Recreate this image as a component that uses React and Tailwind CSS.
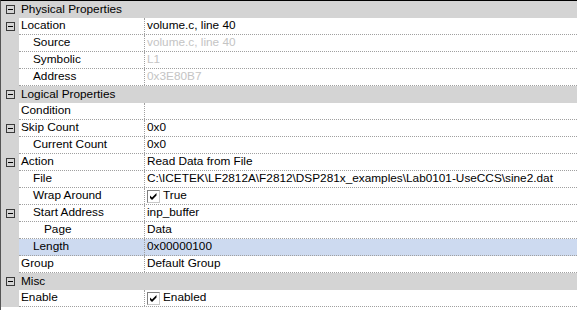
import React from "react";

const rows = [
  { cat: true, name: "Physical Properties" },
  { name: "Location", minus: true, level: 0, value: "volume.c, line 40" },
  { name: "Source", level: 1, value: "volume.c, line 40", dis: true },
  { name: "Symbolic", level: 1, value: "L1", dis: true },
  { name: "Address", level: 1, value: "0x3E80B7", dis: true },
  { cat: true, name: "Logical Properties" },
  { name: "Condition", level: 0, value: "" },
  { name: "Skip Count", minus: true, level: 0, value: "0x0" },
  { name: "Current Count", level: 1, value: "0x0" },
  { name: "Action", minus: true, level: 0, value: "Read Data from File" },
  { name: "File", level: 1, value: "C:\\ICETEK\\LF2812A\\F2812\\DSP281x_examples\\Lab0101-UseCCS\\sine2.dat" },
  { name: "Wrap Around", level: 1, value: "True", check: true },
  { name: "Start Address", minus: true, level: 1, value: "inp_buffer" },
  { name: "Page", level: 2, value: "Data" },
  { name: "Length", level: 1, value: "0x00000100", sel: true },
  { name: "Group", level: 0, value: "Default Group" },
  { cat: true, name: "Misc" },
  { name: "Enable", level: 0, value: "Enabled", check: true },
];

function Minus() {
  return (
    <svg width="9" height="9" viewBox="0 0 9 9" className="block">
      <rect x="0.5" y="0.5" width="8" height="8" fill="none" stroke="#3a3a3a" />
      <line x1="2" y1="4.5" x2="7" y2="4.5" stroke="#000" />
    </svg>
  );
}

function Check() {
  return (
    <span className="inline-flex w-[13px] h-[13px] border border-t-[#808080] border-l-[#808080] border-r-[#c8c8c8] border-b-[#c8c8c8] bg-white items-center justify-center mr-[3px]">
      <svg width="9" height="9" viewBox="0 0 9 9">
        <path d="M1 3.5 L3 5.5 L7.5 1 L7.5 3.5 L3 8 L1 6 Z" fill="#000" />
      </svg>
    </span>
  );
}

const indents = ["pl-[2px]", "pl-[14px]", "pl-[25px]"];

export default function App() {
  return (
    <div
      className="w-[577px] h-[310px] bg-white border-t border-t-black border-l border-l-[#555] overflow-hidden text-[11.8px] text-black"
      style={{ fontFamily: '"Liberation Sans", Arial, sans-serif' }}
    >
      {rows.map((r, i) =>
        r.cat ? (
          <div key={i} className="flex h-[17px] bg-[#d4d4d4] items-center">
            <div className="w-[18px] flex justify-center pl-[1px]">
              <Minus />
            </div>
            <div className="pl-[2px] leading-none">{r.name}</div>
          </div>
        ) : (
          <div key={i} className="flex h-[17px]">
            <div className="w-[18px] shrink-0 bg-[#d4d4d4] flex items-center justify-center pl-[1px]">
              {r.minus ? <Minus /> : null}
            </div>
            <div
              className={
                "flex flex-1 border-b border-dotted border-b-[#a0a0a0] " +
                (r.sel ? "bg-[#cddaf0]" : "bg-white")
              }
            >
              <div
                className={
                  "w-[126px] shrink-0 border-r border-dotted border-r-[#a0a0a0] flex items-center whitespace-nowrap overflow-hidden " +
                  indents[r.level]
                }
              >
                {r.name}
              </div>
              <div
                className={
                  "flex-1 flex items-center pl-[2px] whitespace-nowrap overflow-hidden " +
                  (r.dis ? "text-[#c4c4c4]" : "")
                }
              >
                {r.check ? <Check /> : null}
                {r.value}
              </div>
            </div>
          </div>
        )
      )}
    </div>
  );
}
